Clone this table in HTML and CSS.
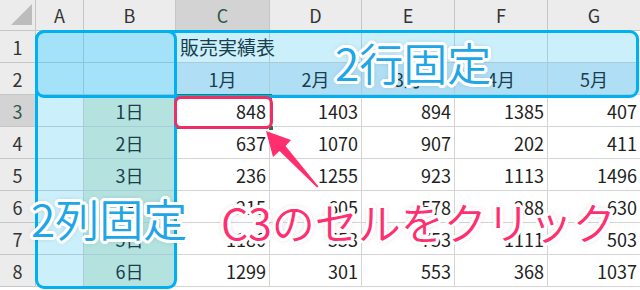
FILE: index.html
```html
<!DOCTYPE html>
<html lang="ja">
<head>
<meta charset="utf-8">
<title>2行2列固定</title>
<link rel="stylesheet" href="styles.css">
</head>
<body>
<div class="sheet">
  <div class="grid">
    <div class="hd corner"><span class="tri"></span></div>
    <div class="hd col">A</div>
    <div class="hd col">B</div>
    <div class="hd col sel">C</div>
    <div class="hd col">D</div>
    <div class="hd col">E</div>
    <div class="hd col">F</div>
    <div class="hd col">G</div>

    <div class="hd row">1</div>
    <div class="c"></div><div class="c"></div>
    <div class="c lft">販売実績表</div><div class="c"></div><div class="c"></div><div class="c"></div><div class="c"></div>

    <div class="hd row">2</div>
    <div class="c"></div><div class="c"></div>
    <div class="c ctr fb">1月</div><div class="c ctr fb">2月</div><div class="c ctr fb">3月</div><div class="c ctr fb">4月</div><div class="c ctr fb">5月</div>

    <div class="hd row sel">3</div>
    <div class="c"></div><div class="c ctr fg">1日</div>
    <div class="c num">848</div><div class="c num">1403</div><div class="c num">894</div><div class="c num">1385</div><div class="c num">407</div>

    <div class="hd row">4</div>
    <div class="c"></div><div class="c ctr fg">2日</div>
    <div class="c num">637</div><div class="c num">1070</div><div class="c num">907</div><div class="c num">202</div><div class="c num">411</div>

    <div class="hd row">5</div>
    <div class="c"></div><div class="c ctr fg">3日</div>
    <div class="c num">236</div><div class="c num">1255</div><div class="c num">923</div><div class="c num">1113</div><div class="c num">1496</div>

    <div class="hd row">6</div>
    <div class="c"></div><div class="c ctr fg">4日</div>
    <div class="c num">215</div><div class="c num">605</div><div class="c num">578</div><div class="c num">288</div><div class="c num">630</div>

    <div class="hd row">7</div>
    <div class="c"></div><div class="c ctr fg">5日</div>
    <div class="c num">1180</div><div class="c num">553</div><div class="c num">753</div><div class="c num">1111</div><div class="c num">503</div>

    <div class="hd row">8</div>
    <div class="c"></div><div class="c ctr fg">6日</div>
    <div class="c num">1299</div><div class="c num">301</div><div class="c num">553</div><div class="c num">368</div><div class="c num">1037</div>
  </div>

  <div class="active"><span class="handle"></span></div>
  <div class="frz frz-rows"></div>
  <div class="frz frz-cols"></div>
  <div class="mark"></div>
  <svg class="arrow" width="640" height="290" viewBox="0 0 640 290">
    <polygon points="266,131 291,140 285.5,146 318.5,186.5 317,187.5 279.5,151 273,157" fill="#ff2f6f"/>
  </svg>
  <div class="big blue rows-label">2行固定</div>
  <div class="big blue cols-label">2列固定</div>
  <div class="big pink click-label">C3のセルをクリック</div>
</div>
</body>
</html>
```

FILE: styles.css
```css
* { box-sizing: border-box; }
html, body { margin: 0; padding: 0; background: #ffffff; }
body { width: 640px; height: 290px; overflow: hidden; }

.sheet {
  position: relative;
  width: 640px;
  height: 290px;
  overflow: hidden;
  font-family: "Noto Sans CJK JP", "Noto Sans", sans-serif;
  font-size: 18px;
  color: #222222;
}

.grid {
  display: grid;
  grid-template-columns: 36px 48px 92px 94px 92px 93px 93px 93px;
  grid-template-rows: 31px repeat(8, 32px);
  width: 641px;
}

.hd {
  background: #ececec;
  border-right: 1px solid #c6c6c6;
  border-bottom: 1px solid #c6c6c6;
  display: flex;
  align-items: center;
  justify-content: center;
  color: #333333;
  line-height: 1;
}
.hd.sel { background: #d3d3d3; color: #2b5a45; }

.corner {
  justify-content: flex-end;
  align-items: flex-end;
  padding: 0 3px 5px 0;
}
.tri {
  width: 21px;
  height: 21px;
  background: #bcbcbc;
  clip-path: polygon(100% 0, 100% 100%, 0 100%);
}

.c {
  border-right: 1px solid #d4d4d4;
  border-bottom: 1px solid #d4d4d4;
  display: flex;
  align-items: center;
  line-height: 1;
  white-space: nowrap;
  overflow: visible;
}
.num { justify-content: flex-end; padding-right: 3px; }
.ctr { justify-content: center; }
.lft { justify-content: flex-start; padding-left: 4px; font-size: 19px; }
.fb { background: #ddebf7; }
.fg { background: #e2efda; }

.active {
  position: absolute;
  left: 175px;
  top: 94px;
  width: 97px;
  height: 35px;
  border: 2px solid #217346;
}
.handle {
  position: absolute;
  right: -4px;
  bottom: -4px;
  width: 6px;
  height: 6px;
  background: #217346;
  border: 1px solid #ffffff;
}

.frz {
  position: absolute;
  border: 3px solid #00b0f0;
  border-radius: 9px;
  background: rgba(0, 176, 240, 0.2);
}
.frz-rows { left: 35px; top: 30px; width: 604px; height: 68px; }
.frz-cols { left: 35px; top: 30px; width: 142px; height: 259px; }

.mark {
  position: absolute;
  left: 174px;
  top: 96px;
  width: 99px;
  height: 33px;
  border: 3px solid #ec2f64;
  border-radius: 7px;
}

.arrow { position: absolute; left: 0; top: 0; }

.big {
  position: absolute;
  font-family: "Noto Sans CJK JP", sans-serif;
  font-size: 44px;
  font-weight: 350;
  line-height: 1;
  white-space: nowrap;
  text-shadow:
    3px 0 0 #fff, -3px 0 0 #fff, 0 3px 0 #fff, 0 -3px 0 #fff,
    2px 2px 0 #fff, -2px 2px 0 #fff, 2px -2px 0 #fff, -2px -2px 0 #fff,
    3px 1px 0 #fff, 3px -1px 0 #fff, -3px 1px 0 #fff, -3px -1px 0 #fff,
    1px 3px 0 #fff, -1px 3px 0 #fff, 1px -3px 0 #fff, -1px -3px 0 #fff,
    0 0 6px rgba(0, 0, 0, 0.35);
}
.blue { color: #1ea6e6; }
.pink { color: #ff2f6f; }
.rows-label { left: 335px; top: 40px; }
.cols-label { left: 31px; top: 196px; }
.click-label { left: 221px; top: 200px; font-size: 43px; }
```
